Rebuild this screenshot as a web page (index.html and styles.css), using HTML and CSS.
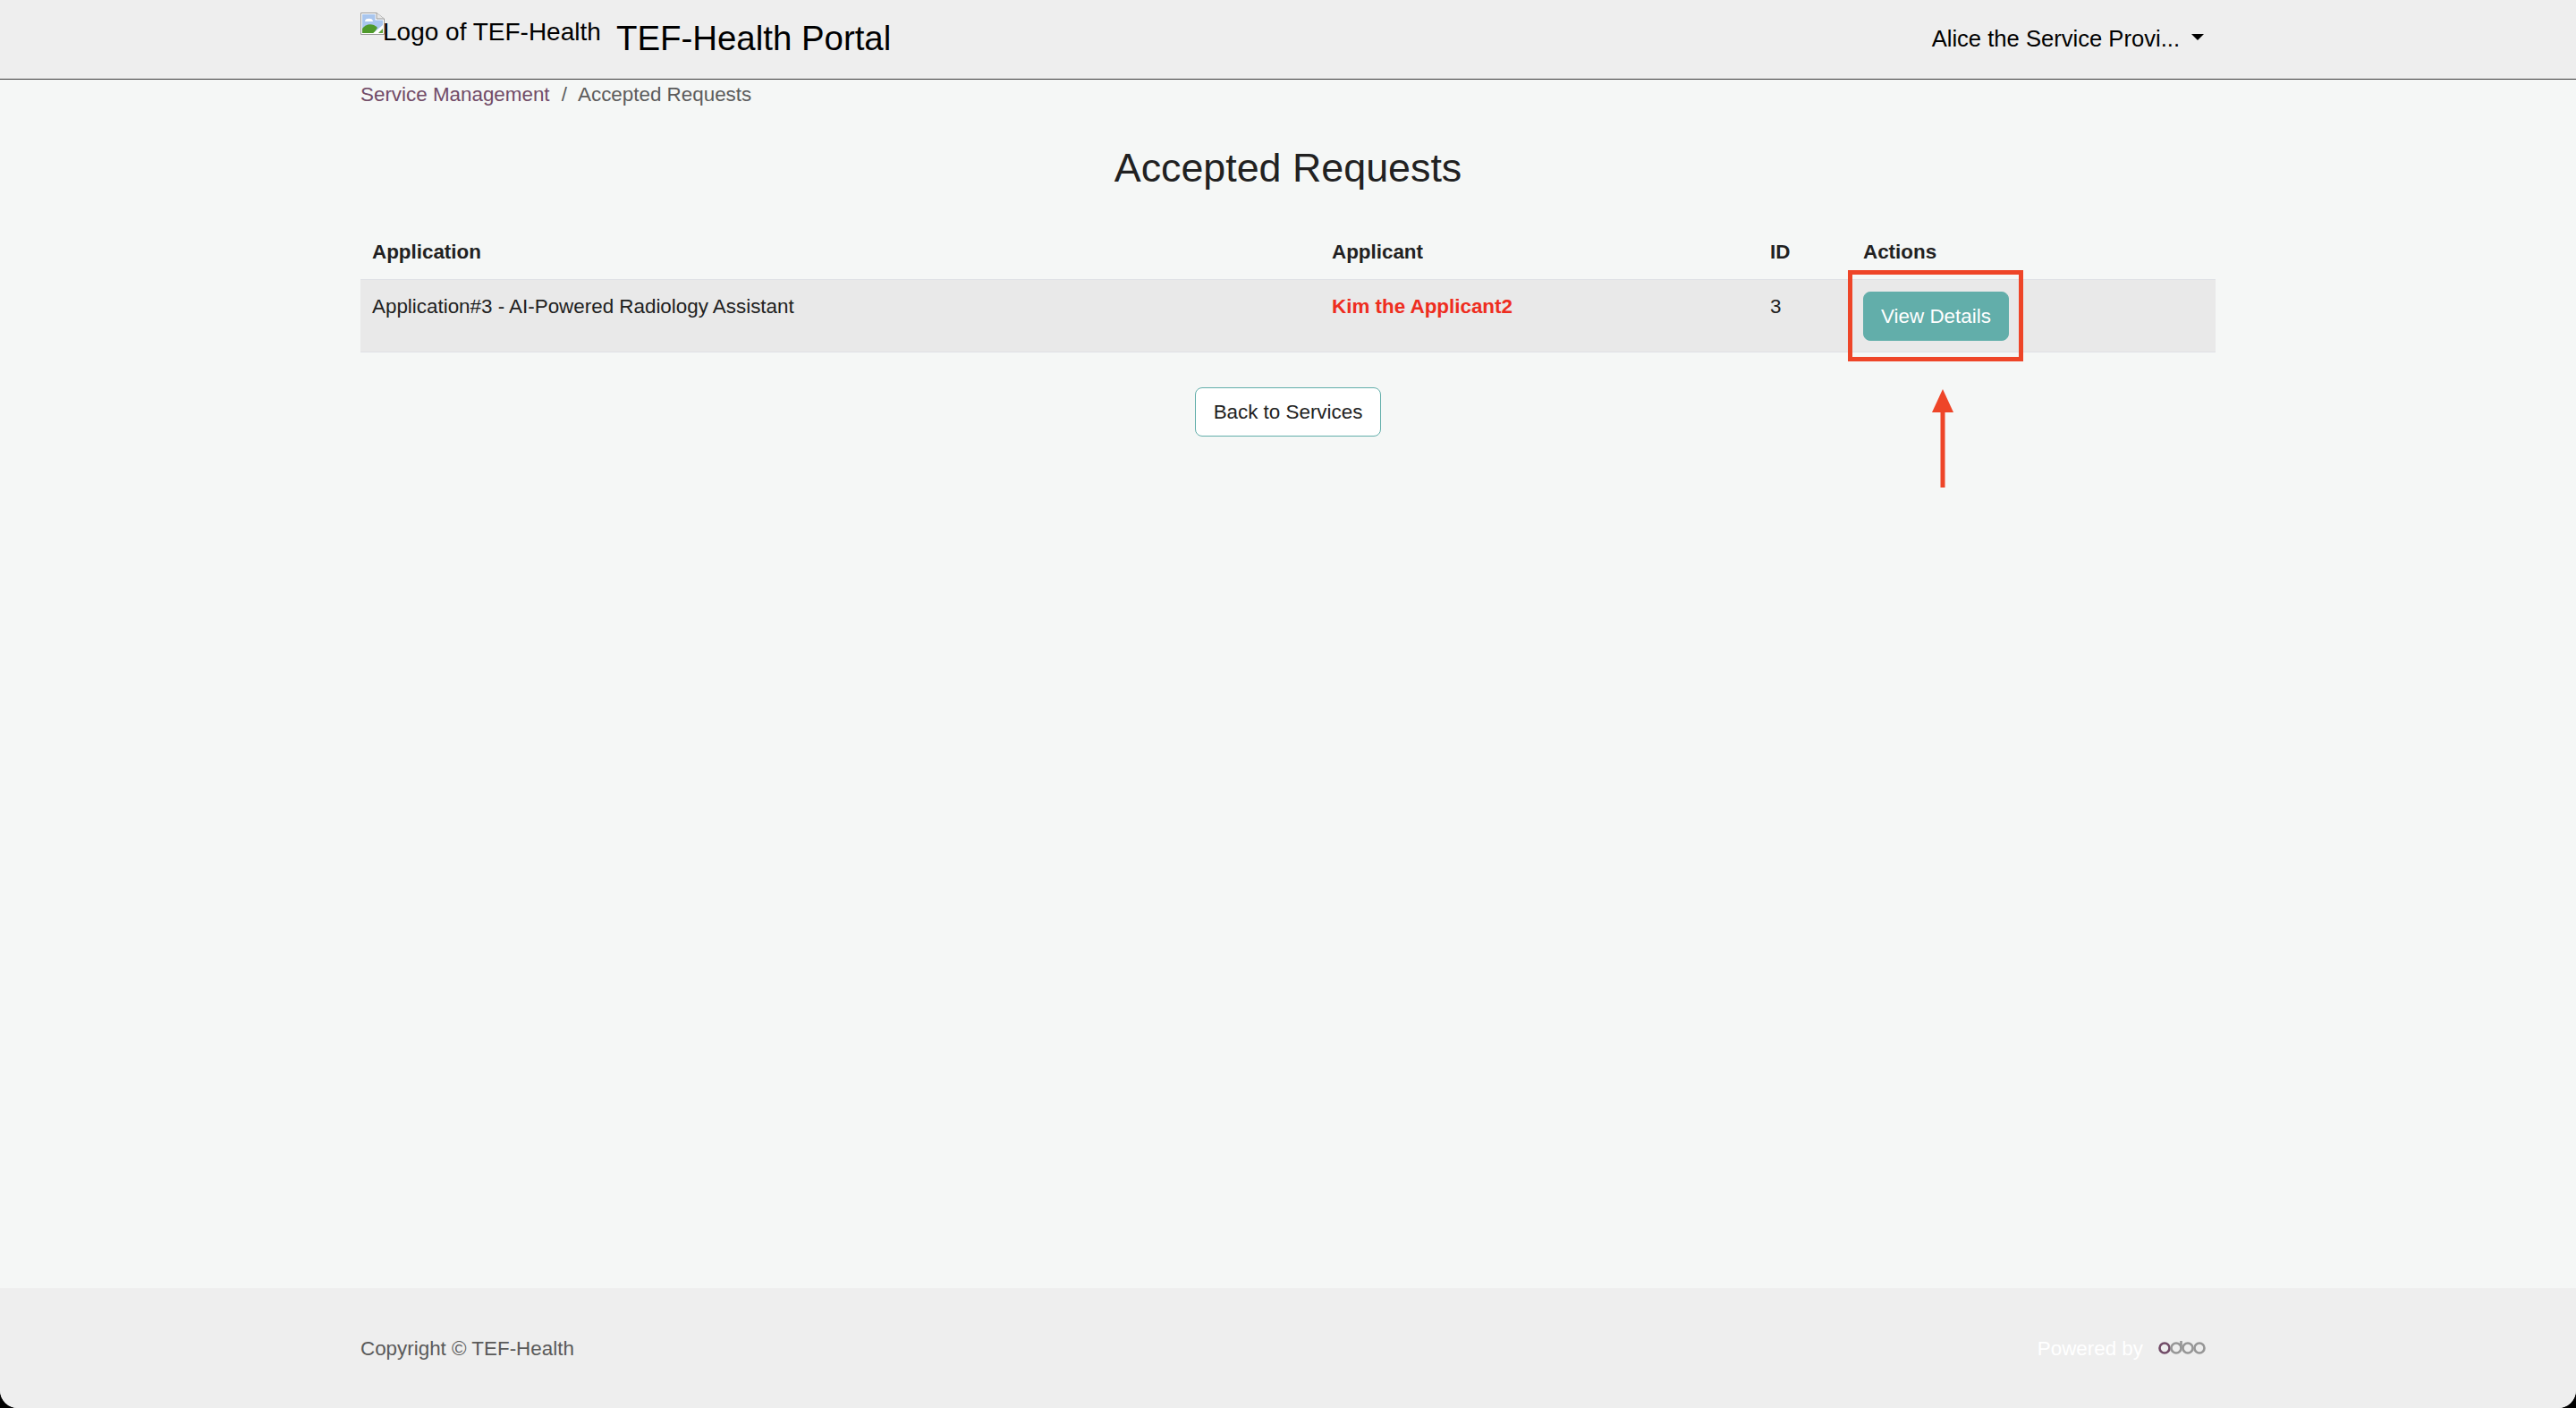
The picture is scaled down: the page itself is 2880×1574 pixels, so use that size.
FILE: index.html
```html
<!DOCTYPE html>
<html lang="en">
<head>
    <meta charset="UTF-8">
    <title>Accepted Requests | TEF-Health Portal</title>
    <link rel="stylesheet" href="styles.css">
</head>
<body>
    <div class="window">
        <header class="topbar">
            <div class="container topbar-inner">
                <a class="brand">
                    <span class="broken-logo">
                        <svg class="broken-icon" width="27" height="25" viewBox="0 0 27 25">
                            <path d="M.5.5H18L26.5 7V24.5H.5Z" fill="#fff" stroke="#9a9a9a"/>
                            <path d="M18 .5V7H26.5" fill="#e6e6e6" stroke="#9a9a9a"/>
                            <path d="M2 2H16.5V8.5H25V16L15 23H2Z" fill="#a9c6ee"/>
                            <path d="M5 10a4 3 0 0 1 9 0Z" fill="#fff"/>
                            <path d="M2 23V18C6 13 13 11 19 17L15 23Z" fill="#4f9a2c"/>
                            <path d="M13 24L25 14V16L20 24Z" fill="#fff"/>
                            <path d="M20 23L25 18V23Z" fill="#5fa33a"/>
                        </svg>Logo of TEF-Health</span>
                    <span class="brand-name">TEF-Health Portal</span>
                </a>
                <a class="user-menu">Alice the Service Provi...<span class="caret"></span></a>
            </div>
        </header>

        <main class="content">
            <div class="container">
                <nav class="breadcrumb">
                    <a>Service Management</a>
                    <span class="sep">/</span>
                    <span class="current">Accepted Requests</span>
                </nav>
                <h1>Accepted Requests</h1>
                <table class="requests">
                    <colgroup>
                        <col class="col-app">
                        <col class="col-applicant">
                        <col class="col-id">
                        <col>
                    </colgroup>
                    <thead>
                        <tr>
                            <th>Application</th>
                            <th>Applicant</th>
                            <th>ID</th>
                            <th>Actions</th>
                        </tr>
                    </thead>
                    <tbody>
                        <tr>
                            <td>Application#3 - AI-Powered Radiology Assistant</td>
                            <td class="applicant">Kim the Applicant2</td>
                            <td>3</td>
                            <td class="action-cell"><a class="btn btn-primary">View Details</a></td>
                        </tr>
                    </tbody>
                </table>
                <div class="back-row">
                    <a class="btn btn-outline">Back to Services</a>
                </div>
            </div>
        </main>

        <footer class="footer">
            <div class="container footer-inner">
                <span class="copyright">Copyright © TEF-Health</span>
                <span class="powered">Powered by
                    <svg class="odoo" width="53" height="22" viewBox="0 0 53 22">
                        <circle cx="7" cy="14" r="5.5" fill="none" stroke="#714b67" stroke-width="2.6"/>
                        <circle cx="20" cy="14" r="5.5" fill="none" stroke="#969696" stroke-width="2.6"/>
                        <path d="M25.5 14V6" fill="none" stroke="#969696" stroke-width="2.6"/>
                        <circle cx="33" cy="14" r="5.5" fill="none" stroke="#969696" stroke-width="2.6"/>
                        <circle cx="46" cy="14" r="5.5" fill="none" stroke="#969696" stroke-width="2.6"/>
                    </svg>
                </span>
            </div>
        </footer>

        <!-- red annotation on top of the page -->
        <svg class="annotation" width="2880" height="1574" viewBox="0 0 2880 1574">
            <rect x="2068.5" y="304.5" width="191" height="97" fill="none" stroke="#ee4528" stroke-width="5"/>
            <path d="M2172 435L2184 461H2160Z" fill="#ee4528"/>
            <rect x="2169.5" y="460" width="5" height="85" fill="#ee4528"/>
        </svg>
    </div>
</body>
</html>
```

FILE: styles.css
```css
html, body {
    margin: 0;
    padding: 0;
    height: 100%;
    background-color: #000;
}
body {
    font-family: "Liberation Sans", Arial, sans-serif;
    font-size: 22.4px;
    color: #212121;
}
.window {
    position: relative;
    display: flex;
    flex-direction: column;
    height: 1574px;
    overflow: hidden;
    background-color: #f5f7f6;
    border-radius: 0 0 20px 20px;
}
.container {
    width: 2074px;
    margin: 0 auto;
}
.topbar {
    height: 88px;
    background-color: #eeeeee;
    border-bottom: 1px solid #3a3a3a;
    flex-shrink: 0;
}
.topbar-inner {
    display: flex;
    justify-content: space-between;
    color: #000;
}
.brand {
    display: flex;
    padding-top: 14px;
}
.broken-logo {
    font-size: 28px;
    line-height: 32px;
    display: block;
    width: 286px;
    padding-top: 6px;
    white-space: nowrap;
}
.broken-icon {
    vertical-align: top;
    margin-top: -6px;
    margin-right: -2px;
}
.brand-name {
    font-size: 38.4px;
    line-height: 46px;
    padding-top: 6px;
}
.user-menu {
    display: flex;
    align-items: center;
    height: 86px;
    font-size: 25.6px;
    margin-right: 13px;
}
.caret {
    width: 0;
    height: 0;
    margin-left: 13px;
    margin-bottom: 4px;
    border-top: 7px solid #000;
    border-left: 7px solid transparent;
    border-right: 7px solid transparent;
}
.content {
    flex: 1;
}
.breadcrumb {
    height: 34px;
    line-height: 34px;
    color: #5c5c5c;
}
.breadcrumb a {
    color: #714b67;
}
.breadcrumb .sep {
    margin: 0 7px;
}
h1 {
    margin: 30px 0 0;
    height: 68px;
    line-height: 68px;
    font-size: 44.8px;
    font-weight: 400;
    text-align: center;
    color: #212121;
}
.requests {
    width: 100%;
    margin-top: 29px;
    border-collapse: collapse;
    table-layout: fixed;
}
.col-app { width: 1073px; }
.col-applicant { width: 490px; }
.col-id { width: 104px; }
.requests th {
    height: 62px;
    padding: 3px 13px 0;
    box-sizing: border-box;
    text-align: left;
    font-weight: 700;
    vertical-align: middle;
}
.requests td {
    height: 81px;
    padding: 16px 13px 0;
    box-sizing: border-box;
    vertical-align: top;
    line-height: 28px;
    background-color: #e9e9e9;
    border-top: 1px solid #dfe1e5;
    border-bottom: 1px solid #dfe1e5;
}
.requests .action-cell {
    padding-top: 13px;
}
.applicant {
    color: #ee2d20;
    font-weight: 700;
}
.btn {
    display: inline-block;
    box-sizing: border-box;
    text-align: center;
    border-radius: 8px;
    height: 55px;
    line-height: 53px;
    border: 1px solid #62aeaa;
}
.btn-primary {
    display: block;
    width: 163px;
    background-color: #62aeaa;
    color: #fff;
}
.btn-outline {
    width: 208px;
    background-color: #fff;
    color: #212121;
}
.back-row {
    margin-top: 39px;
    text-align: center;
}
.footer {
    height: 134px;
    background-color: #eeeeee;
    flex-shrink: 0;
}
.footer-inner {
    display: flex;
    justify-content: space-between;
    padding-top: 53px;
    line-height: 30px;
}
.copyright {
    color: #5a5a5a;
}
.powered {
    color: #fff;
    margin-right: 11px;
    display: flex;
    gap: 17px;
}
.annotation {
    position: absolute;
    top: 0;
    left: 0;
    pointer-events: none;
}
```
